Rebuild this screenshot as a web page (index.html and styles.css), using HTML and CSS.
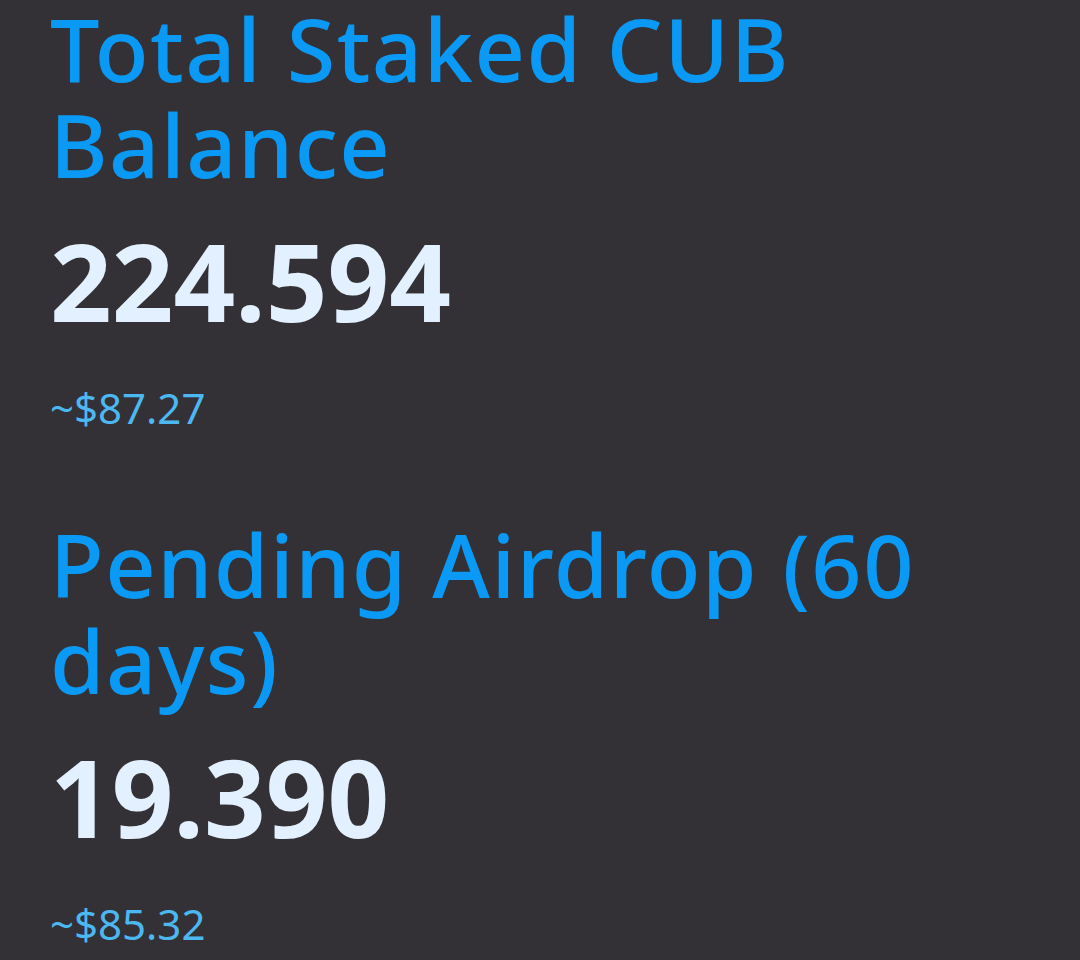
FILE: index.html
```html
<!DOCTYPE html>
<html lang="en">
<head>
    <meta charset="UTF-8">
    <meta name="viewport" content="width=device-width, initial-scale=1.0">
    <title>Staking</title>
    <link rel="stylesheet" href="styles.css">
</head>
<body>
<div class="main">
    <div class="stat">
        <h2 class="stat-title">Total Staked CUB Balance</h2>
        <p class="stat-value">224.594</p>
        <p class="stat-usd">~$87.27</p>
    </div>
    <div class="stat">
        <h2 class="stat-title">Pending Airdrop (60 days)</h2>
        <p class="stat-value">19.390</p>
        <p class="stat-usd">~$85.32</p>
    </div>
</div>
</body>
</html>
```

FILE: styles.css
```css
*{
    margin: 0;
    padding: 0;
}
html,body {
    height: 100%;
}
body{
    background-color: #333135;
    font-family: "Noto Sans", "Open Sans", sans-serif;
}
.main{
    padding: 0 50px;
    display: flex;
    flex-direction: column;
    gap: 80px;
}
.stat{
    display: flex;
    flex-direction: column;
}
.stat-title{
    font-size: 88px;
    line-height: 96px;
    font-weight: 500;
    letter-spacing: 1.5px;
    color: #0a9af5;
}
.stat-value{
    margin-top: 24px;
    font-size: 108px;
    line-height: 130px;
    font-weight: 700;
    color: #e2f0ff;
}
.stat-usd{
    margin-top: 33px;
    font-size: 42px;
    line-height: 57px;
    color: #4cb8f2;
}
```
